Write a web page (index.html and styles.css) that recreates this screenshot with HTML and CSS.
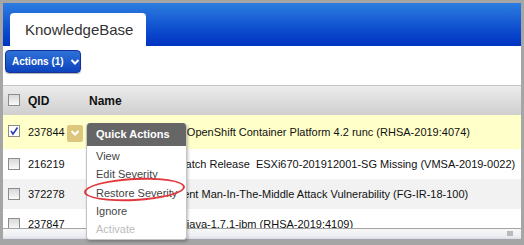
FILE: index.html
```html
<!DOCTYPE html>
<html lang="en">
<head>
    <meta charset="UTF-8">
    <title>KnowledgeBase</title>
    <link rel="stylesheet" href="styles.css">
</head>
<body>
    <div class="frame">
        <div class="top-bar">
            <div class="tab">KnowledgeBase</div>
        </div>

        <div class="toolbar">
            <button class="actions-btn"><span>Actions (1)</span>
                <svg width="10" height="8" viewBox="0 0 10 8"><polyline points="1.5,2 5,5.5 8.5,2" fill="none" stroke="#fff" stroke-width="2"/></svg>
            </button>
        </div>

        <div class="grid-head">
            <div class="col-check"><span class="check"></span></div>
            <div class="col-qid">QID</div>
            <div class="col-name">Name</div>
        </div>

        <div class="grid-body">
            <div class="row selected">
                <div class="col-check">
                    <span class="check checked">
                        <svg width="10" height="10" viewBox="0 0 10 10"><polyline points="2,5 4,8 8.5,1.5" fill="none" stroke="#2a3fb0" stroke-width="1.6"/></svg>
                    </span>
                </div>
                <div class="col-qid">237844
                    <span class="row-menu-btn">
                        <svg width="10" height="8" viewBox="0 0 10 8"><polyline points="1.5,2 5,5.5 8.5,2" fill="none" stroke="#fff" stroke-width="2"/></svg>
                    </span>
                </div>
                <div class="col-name">Red Hat Update for OpenShift Container Platform 4.2 runc (RHSA-2019:4074)</div>
            </div>
            <div class="row">
                <div class="col-check"><span class="check"></span></div>
                <div class="col-qid">216219</div>
                <div class="col-name">VMware ESXi 6.7 Patch Release&nbsp; ESXi670-201912001-SG Missing (VMSA-2019-0022)</div>
            </div>
            <div class="row alt">
                <div class="col-check"><span class="check"></span></div>
                <div class="col-qid">372278</div>
                <div class="col-name">Fortinet FortiOS Client Man-In-The-Middle Attack Vulnerability (FG-IR-18-100)</div>
            </div>
            <div class="row">
                <div class="col-check"><span class="check"></span></div>
                <div class="col-qid">237847</div>
                <div class="col-name">Red Hat Update for java-1.7.1-ibm (RHSA-2019:4109)</div>
            </div>
        </div>

        <div class="h-scroll"><span class="grip"></span></div>
    </div>

    <div class="quick-menu">
        <div class="quick-menu-title">Quick Actions</div>
        <ul>
            <li>View</li>
            <li>Edit Severity</li>
            <li>Restore Severity</li>
            <li>Ignore</li>
            <li class="disabled">Activate</li>
        </ul>
    </div>
    <div class="highlight-ring"></div>
</body>
</html>
```

FILE: styles.css
```css
body {
    margin: 0;
    height: 245px;
    overflow: hidden;
    background: #a5a5a5;
    font-family: "Liberation Sans", Arial, sans-serif;
    position: relative;
}

.frame {
    margin: 3px 0 0 3px;
    width: 518px;
    height: 236px;
    background: #fff;
    display: flex;
    flex-direction: column;
    overflow: hidden;
}

.top-bar {
    height: 43px;
    flex: none;
    display: flex;
    align-items: flex-end;
    padding-left: 7px;
    background: linear-gradient(#2c7de0, #0a47cc 70%, #0033c2);
}

.tab {
    width: 121px;
    height: 33px;
    padding-left: 15px;
    line-height: 34px;
    background: #fff;
    border-radius: 4px 4px 0 0;
    color: #333;
    font-size: 15px;
}

.toolbar {
    height: 39px;
    flex: none;
    padding: 4px 0 0 2px;
    box-sizing: border-box;
}

.actions-btn {
    width: 76px;
    height: 23px;
    padding: 0 0 0 6px;
    display: flex;
    align-items: center;
    gap: 6px;
    white-space: nowrap;
    border: 1px solid #12319a;
    border-radius: 4px;
    background: linear-gradient(#2e72d8, #0d43bd);
    color: #fff;
    font-family: inherit;
    font-size: 10px;
    font-weight: bold;
    box-shadow: 0 1px 1px rgba(0, 0, 0, 0.3);
}

.grid-head {
    height: 29px;
    flex: none;
    display: flex;
    align-items: center;
    border-top: 1px solid #c6c6c6;
    background: linear-gradient(#ececec, #cfcfcf);
    font-size: 12px;
    font-weight: bold;
    color: #111;
}

.col-check {
    width: 25px;
    flex: none;
    padding-left: 5px;
    box-sizing: border-box;
    display: flex;
}

.col-qid {
    width: 61px;
    flex: none;
    display: flex;
    align-items: center;
}

.col-name {
    white-space: nowrap;
}

.check {
    width: 12px;
    height: 12px;
    box-sizing: border-box;
    border: 1px solid #8c8c8c;
    background: linear-gradient(#d8d8d8, #fafafa);
    display: flex;
    align-items: center;
    justify-content: center;
}

.check.checked {
    background: #fff;
}

.grid-head .check {
    margin-top: -1px;
}

.grid-body {
    flex: 1;
    overflow: hidden;
    font-size: 11px;
    color: #111;
}

.row {
    height: 30px;
    display: flex;
    align-items: center;
}

.row.selected {
    height: 34px;
    background: #ffffc9;
}

.row.selected .check {
    margin-top: -3px;
}

.row.alt {
    background: #f2f2f2;
}

.row-menu-btn {
    width: 16px;
    height: 17px;
    margin-left: 2px;
    margin-top: 2px;
    background: #dcc77c;
    border-radius: 2px;
    display: flex;
    align-items: center;
    justify-content: center;
}

.h-scroll {
    height: 10px;
    flex: none;
    border-top: 1px solid #a3a3a3;
    background: linear-gradient(#f7f7f7, #eceef2 70%, #d9dde8);
    position: relative;
}

.grip {
    position: absolute;
    right: 8px;
    top: 2px;
    width: 6px;
    height: 5px;
    background: radial-gradient(circle, #b8b8b8 0.7px, transparent 1px) 0 0 / 2px 2px;
}

.quick-menu {
    position: absolute;
    left: 86px;
    top: 123px;
    width: 101px;
    height: 117px;
    background: #fff;
    border: 1px solid #c4c4c4;
    border-top: none;
    border-radius: 4px;
    box-sizing: border-box;
    box-shadow: 1px 2px 3px rgba(0, 0, 0, 0.25);
    overflow: hidden;
}

.quick-menu-title {
    height: 23px;
    line-height: 23px;
    padding-left: 9px;
    background: #666;
    color: #fff;
    font-size: 11px;
    font-weight: bold;
}

.quick-menu ul {
    list-style: none;
    margin: 0;
    padding: 1px 0 0 9px;
}

.quick-menu li {
    height: 18.3px;
    line-height: 18px;
    font-size: 11px;
    color: #444;
}

.quick-menu li.disabled {
    color: #bcbcbc;
}

.highlight-ring {
    position: absolute;
    left: 84px;
    top: 178px;
    width: 101px;
    height: 23px;
    box-sizing: border-box;
    border: 2px solid #e2373c;
    border-radius: 50%;
    transform: rotate(-3deg);
}
```
